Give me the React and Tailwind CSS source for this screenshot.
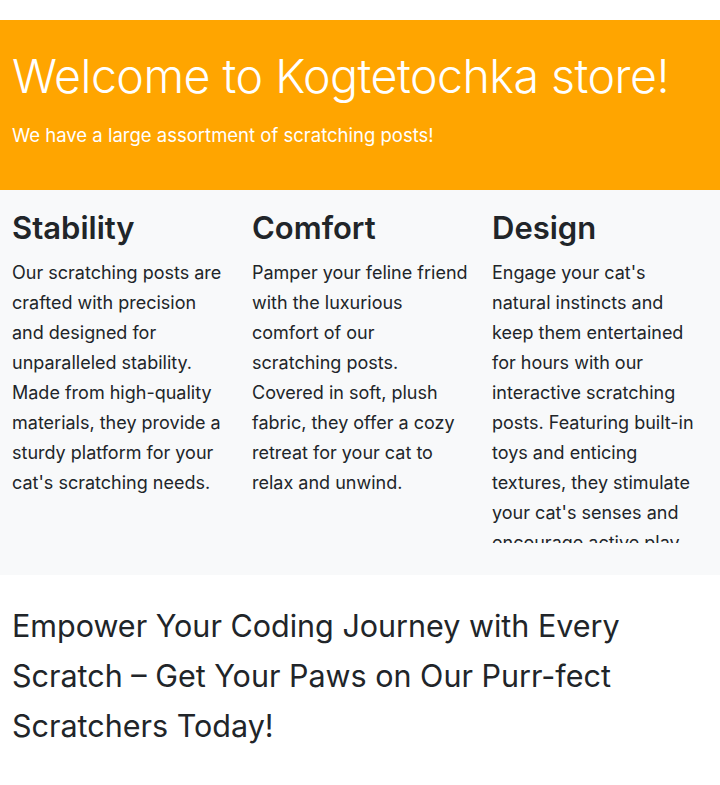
import React from 'react';

const features = [
    {
        title: 'Stability',
        text: "Our scratching posts are crafted with precision and designed for unparalleled stability. Made from high-quality materials, they provide a sturdy platform for your cat's scratching needs.",
    },
    {
        title: 'Comfort',
        text: 'Pamper your feline friend with the luxurious comfort of our scratching posts. Covered in soft, plush fabric, they offer a cozy retreat for your cat to relax and unwind.',
    },
    {
        title: 'Design',
        text: "Engage your cat's natural instincts and keep them entertained for hours with our interactive scratching posts. Featuring built-in toys and enticing textures, they stimulate your cat's senses and encourage active play.",
    },
];

const App = () => {
    return (
        <div className="min-h-screen bg-white text-[#212529] font-['Inter',sans-serif] pt-5">
            <header className="bg-[#ffa500] text-white px-3 pt-[29px] h-[170px]">
                <h1 className="text-[46.5px] font-light leading-[1.2] tracking-[-0.5px]">Welcome to Kogtetochka store!</h1>
                <p className="text-[18.5px] font-normal mt-[17px]">We have a large assortment of scratching posts!</p>
            </header>

            <section className="bg-[#f8f9fa] pt-[19px] pb-8">
                <div className="grid grid-cols-3">
                    {features.map((item) => (
                        <div key={item.title} className="px-3 h-[334px] overflow-hidden">
                            <h2 className="text-[31px] font-semibold leading-[1.2] mb-[12px]">{item.title}</h2>
                            <p className="text-[18px] leading-[30px]">{item.text}</p>
                        </div>
                    ))}
                </div>
            </section>

            <section className="px-3 pt-[26px]">
                <p className="text-[30.5px] leading-[50px]">
                    Empower Your Coding Journey with Every Scratch – Get Your Paws on Our Purr-fect Scratchers Today!
                </p>
            </section>
        </div>
    );
};

export default App;
